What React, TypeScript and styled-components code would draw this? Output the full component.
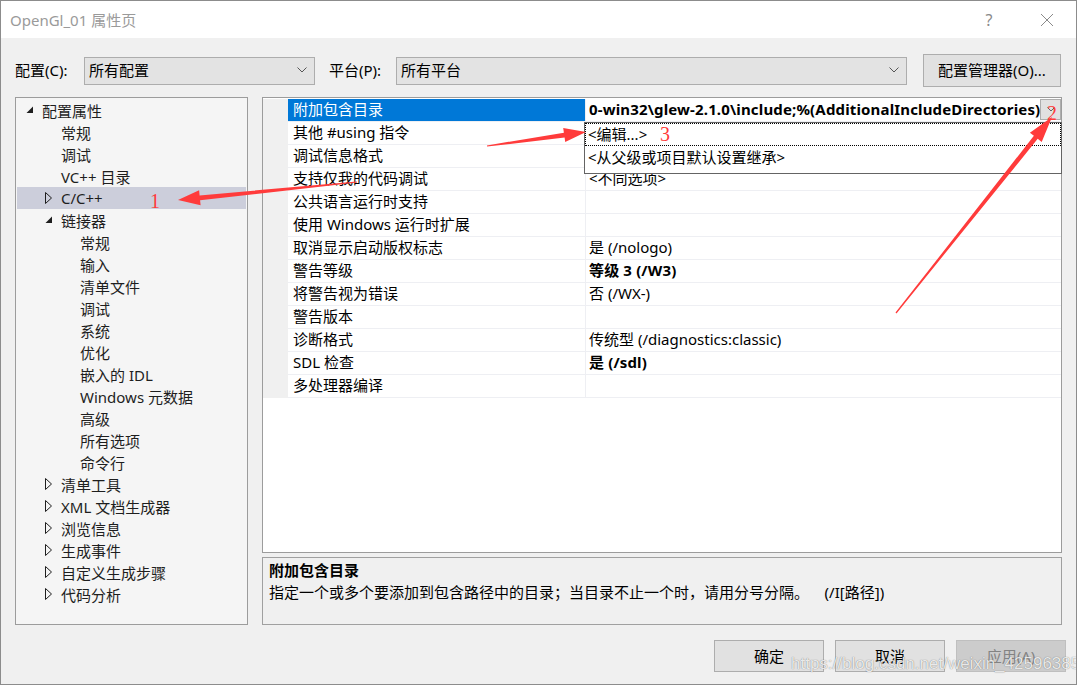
import React from "react";
import styled, { createGlobalStyle } from "styled-components";

const GlobalStyle = createGlobalStyle`
  html, body { margin: 0; padding: 0; background: #ffffff; }
  body { font-family: "Noto Sans", "Noto Sans CJK SC", sans-serif; }
  * { box-sizing: border-box; }
`;

const Window = styled.div`
  position: relative;
  width: 1077px;
  height: 685px;
  border: 1px solid #8c8c8c;
  background: #f0f0f0;
  display: flex;
  flex-direction: column;
  overflow: hidden;
  font-size: 15px;
  color: #000;
`;

const TitleBar = styled.div`
  height: 37px;
  flex-shrink: 0;
  background: #fff;
  display: flex;
  align-items: center;
  padding-left: 9px;
`;

const Title = styled.div`
  flex: 1;
  color: #9a9a9a;
  font-size: 15px;
  padding-bottom: 1px;
`;

const CaptionButtons = styled.div`
  display: flex;
  gap: 12px;
  padding-right: 6px;
`;

const CaptionButton = styled.div`
  width: 46px;
  height: 37px;
  display: flex;
  align-items: center;
  justify-content: center;
  color: #8a8a8a;
  font-size: 16px;
`;

const ConfigRow = styled.div`
  margin-top: 16px;
  height: 33px;
  flex-shrink: 0;
  padding-left: 14px;
  display: flex;
  align-items: center;
`;

const Label = styled.div<{ $w: number; $ml?: number }>`
  width: ${(p) => p.$w}px;
  margin-left: ${(p) => p.$ml ?? 0}px;
  color: #000;
  white-space: nowrap;
  padding-bottom: 3px;
`;

const Select = styled.div<{ $w: number }>`
  width: ${(p) => p.$w}px;
  height: 28px;
  background: #e3e3e3;
  border: 1px solid #adadad;
  display: flex;
  align-items: center;
  justify-content: space-between;
  padding: 0 7px 2px 4px;
  color: #000;
`;

const PushButton = styled.div<{ $w: number; $h: number; $disabled?: boolean }>`
  width: ${(p) => p.$w}px;
  height: ${(p) => p.$h}px;
  background: ${(p) => (p.$disabled ? "#cccccc" : "#e1e1e1")};
  border: 1px solid ${(p) => (p.$disabled ? "#bfbfbf" : "#adadad")};
  color: ${(p) => (p.$disabled ? "#838383" : "#000")};
  display: flex;
  align-items: center;
  justify-content: center;
  flex-shrink: 0;
  padding-bottom: 1px;
`;

const ManagerButton = styled(PushButton)`
  margin-left: 16px;
  padding-bottom: 3px;
`;

const Main = styled.div`
  margin-top: 10px;
  height: 528px;
  flex-shrink: 0;
  padding-left: 14px;
  display: flex;
  gap: 14px;
`;

const TreePanel = styled.div`
  width: 233px;
  height: 100%;
  background: #f5f5f5;
  border: 1px solid #9c9c9c;
  padding: 1px 1px 0;
  display: flex;
  flex-direction: column;
`;

const TreeRow = styled.div<{ $level: number; $selected?: boolean }>`
  height: 22px;
  flex-shrink: 0;
  display: flex;
  align-items: center;
  padding-left: ${(p) => 9 + p.$level * 19}px;
  background: ${(p) => (p.$selected ? "#cccedb" : "transparent")};
  color: #1e1e1e;
  white-space: nowrap;
`;

const TreeIcon = styled.svg`
  width: 16px;
  height: 22px;
  flex-shrink: 0;
`;

const RightColumn = styled.div`
  width: 800px;
  height: 100%;
  display: flex;
  flex-direction: column;
  gap: 4px;
`;

const Grid = styled.div`
  height: 456px;
  flex-shrink: 0;
  background: #fff;
  border: 1px solid #9c9c9c;
  padding-top: 1px;
  display: flex;
  flex-direction: column;
`;

const GridRow = styled.div`
  position: relative;
  height: 23px;
  display: flex;
  flex-shrink: 0;
`;

const Gutter = styled.div`
  width: 25px;
  flex-shrink: 0;
  background: #f0f0f0;
`;

const NameCell = styled.div<{ $selected?: boolean }>`
  width: 298px;
  flex-shrink: 0;
  padding-left: 5px;
  line-height: 21px;
  border-bottom: 1px solid #eeeff3;
  border-right: 1px solid #eeeff3;
  background: ${(p) => (p.$selected ? "#0078d7" : "transparent")};
  color: ${(p) => (p.$selected ? "#fff" : "#000")};
  white-space: nowrap;
`;

const ValueCell = styled.div<{ $bold?: boolean }>`
  flex: 1;
  min-width: 0;
  display: flex;
  align-items: flex-start;
  justify-content: space-between;
  padding-left: 3px;
  line-height: 21px;
  border-bottom: 1px solid #eeeff3;
  font-weight: ${(p) => (p.$bold ? 700 : 400)};
  letter-spacing: ${(p) => (p.$bold ? "0.15px" : "0")};
  white-space: nowrap;
  overflow: hidden;
`;

const DropButton = styled.div`
  width: 21px;
  height: 21px;
  flex-shrink: 0;
  background: #e1e1e1;
  border: 1px solid #adadad;
  display: flex;
  align-items: center;
  justify-content: center;
`;

const Popup = styled.div`
  position: absolute;
  left: 321px;
  top: 23px;
  width: 478px;
  height: 52px;
  background: #fff;
  border: 1px solid #646464;
  z-index: 2;
`;

const PopupItem = styled.div<{ $focused?: boolean }>`
  height: 23px;
  line-height: 20px;
  padding-left: 2px;
  border: 1px ${(p) => (p.$focused ? "dotted #000" : "solid transparent")};
  white-space: nowrap;
`;

const DescPanel = styled.div`
  height: 68px;
  flex-shrink: 0;
  border: 1px solid #a0a0a0;
  background: #f0f0f0;
  padding: 1px 6px 0;
`;

const DescTitle = styled.div`
  font-weight: 700;
  line-height: 22px;
`;

const DescText = styled.div`
  line-height: 22px;
  white-space: pre;
`;

const Footer = styled.div`
  margin-top: 15px;
  padding-right: 10px;
  display: flex;
  justify-content: flex-end;
  gap: 11px;
`;

const Watermark = styled.div`
  position: absolute;
  left: 790px;
  top: 653px;
  font-family: "Liberation Sans", sans-serif;
  font-size: 17px;
  color: rgba(255, 255, 255, 0.85);
  text-shadow: 0 0 1px rgba(0, 0, 0, 0.55);
  pointer-events: none;
  z-index: 5;
`;

const Annotations = styled.div`
  position: absolute;
  left: 0;
  top: 0;
  width: 100%;
  height: 100%;
  pointer-events: none;
  z-index: 10;
`;

const ArrowLayer = styled.svg`
  position: absolute;
  left: -1px;
  top: -1px;
  width: 1077px;
  height: 685px;
`;

const Mark = styled.span<{ $x: number; $y: number }>`
  position: absolute;
  left: ${(p) => p.$x - 1}px;
  top: ${(p) => p.$y - 1}px;
  font-family: "Liberation Serif", serif;
  font-size: 20px;
  line-height: 20px;
  color: #ff3b3b;
`;

const Chevron = ({ size = 10, color = "#555" }: { size?: number; color?: string }) => (
  <svg width={size} height={size * 0.6} viewBox="0 0 10 6">
    <polyline points="0.5,0.5 5,5 9.5,0.5" fill="none" stroke={color} strokeWidth="1" />
  </svg>
);

type TreeItem = { level: number; text: string; icon?: "open" | "closed"; selected?: boolean };

const treeItems: TreeItem[] = [
  { level: 0, text: "配置属性", icon: "open" },
  { level: 1, text: "常规" },
  { level: 1, text: "调试" },
  { level: 1, text: "VC++ 目录" },
  { level: 1, text: "C/C++", icon: "closed", selected: true },
  { level: 1, text: "链接器", icon: "open" },
  { level: 2, text: "常规" },
  { level: 2, text: "输入" },
  { level: 2, text: "清单文件" },
  { level: 2, text: "调试" },
  { level: 2, text: "系统" },
  { level: 2, text: "优化" },
  { level: 2, text: "嵌入的 IDL" },
  { level: 2, text: "Windows 元数据" },
  { level: 2, text: "高级" },
  { level: 2, text: "所有选项" },
  { level: 2, text: "命令行" },
  { level: 1, text: "清单工具", icon: "closed" },
  { level: 1, text: "XML 文档生成器", icon: "closed" },
  { level: 1, text: "浏览信息", icon: "closed" },
  { level: 1, text: "生成事件", icon: "closed" },
  { level: 1, text: "自定义生成步骤", icon: "closed" },
  { level: 1, text: "代码分析", icon: "closed" },
];

type Prop = { name: string; value?: string; bold?: boolean };

const props: Prop[] = [
  { name: "附加包含目录", value: "0-win32\\glew-2.1.0\\include;%(AdditionalIncludeDirectories)", bold: true },
  { name: "其他 #using 指令" },
  { name: "调试信息格式" },
  { name: "支持仅我的代码调试", value: "<不同选项>" },
  { name: "公共语言运行时支持" },
  { name: "使用 Windows 运行时扩展" },
  { name: "取消显示启动版权标志", value: "是 (/nologo)" },
  { name: "警告等级", value: "等级 3 (/W3)", bold: true },
  { name: "将警告视为错误", value: "否 (/WX-)" },
  { name: "警告版本" },
  { name: "诊断格式", value: "传统型 (/diagnostics:classic)" },
  { name: "SDL 检查", value: "是 (/sdl)", bold: true },
  { name: "多处理器编译" },
];

function arrowPoints(tx: number, ty: number, px: number, py: number, hl: number, hw: number) {
  const dx = px - tx;
  const dy = py - ty;
  const len = Math.hypot(dx, dy);
  const ux = dx / len;
  const uy = dy / len;
  const nx = -uy;
  const ny = ux;
  const bx = px - ux * hl;
  const by = py - uy * hl;
  const pts: [number, number][] = [
    [tx + nx * 0.6, ty + ny * 0.6],
    [bx + nx * 2.4, by + ny * 2.4],
    [bx + nx * hw, by + ny * hw],
    [px, py],
    [bx - nx * hw, by - ny * hw],
    [bx - nx * 2.4, by - ny * 2.4],
    [tx - nx * 0.6, ty - ny * 0.6],
  ];
  return pts.map(([x, y]) => `${x.toFixed(1)},${y.toFixed(1)}`).join(" ");
}

const TreeGlyph = ({ icon }: { icon?: "open" | "closed" }) => (
  <TreeIcon viewBox="0 0 16 22">
    {icon === "open" && <polygon points="7,7.5 7,14 0.5,14" fill="#1e1e1e" />}
    {icon === "closed" && (
      <polygon points="0.5,5.5 6.5,11 0.5,16.5" fill="none" stroke="#1e1e1e" strokeWidth="1" />
    )}
  </TreeIcon>
);

export default function App() {
  return (
    <>
      <GlobalStyle />
      <Window>
        <TitleBar>
          <Title>OpenGl_01 属性页</Title>
          <CaptionButtons>
            <CaptionButton>?</CaptionButton>
            <CaptionButton>
              <svg width="14" height="14" viewBox="0 0 14 14">
                <line x1="1" y1="1" x2="13" y2="13" stroke="#8a8a8a" strokeWidth="1" />
                <line x1="13" y1="1" x2="1" y2="13" stroke="#8a8a8a" strokeWidth="1" />
              </svg>
            </CaptionButton>
          </CaptionButtons>
        </TitleBar>

        <ConfigRow>
          <Label $w={69}>配置(C):</Label>
          <Select $w={231}>
            <span>所有配置</span>
            <Chevron />
          </Select>
          <Label $w={67} $ml={14}>平台(P):</Label>
          <Select $w={511}>
            <span>所有平台</span>
            <Chevron />
          </Select>
          <ManagerButton $w={138} $h={33}>配置管理器(O)...</ManagerButton>
        </ConfigRow>

        <Main>
          <TreePanel>
            {treeItems.map((it, i) => (
              <TreeRow key={i} $level={it.level} $selected={it.selected}>
                <TreeGlyph icon={it.icon} />
                <span>{it.text}</span>
              </TreeRow>
            ))}
          </TreePanel>

          <RightColumn>
            <Grid>
              {props.map((p, i) => (
                <GridRow key={i}>
                  <Gutter />
                  <NameCell $selected={i === 0}>{p.name}</NameCell>
                  <ValueCell $bold={p.bold}>
                    <span>{p.value ?? ""}</span>
                    {i === 0 && (
                      <DropButton>
                        <Chevron size={8} color="#444" />
                      </DropButton>
                    )}
                  </ValueCell>
                  {i === 0 && (
                    <Popup>
                      <PopupItem $focused>&lt;编辑...&gt;</PopupItem>
                      <PopupItem>&lt;从父级或项目默认设置继承&gt;</PopupItem>
                    </Popup>
                  )}
                </GridRow>
              ))}
            </Grid>
            <DescPanel>
              <DescTitle>附加包含目录</DescTitle>
              <DescText>{"指定一个或多个要添加到包含路径中的目录；当目录不止一个时，请用分号分隔。    (/I[路径])"}</DescText>
            </DescPanel>
          </RightColumn>
        </Main>

        <Footer>
          <PushButton $w={110} $h={32}>确定</PushButton>
          <PushButton $w={110} $h={32}>取消</PushButton>
          <PushButton $w={110} $h={32} $disabled>应用(A)</PushButton>
        </Footer>

        <Watermark>https://blog.csdn.net/weixin_42596385</Watermark>

        <Annotations>
          <ArrowLayer viewBox="0 0 1077 685">
            <polygon points={arrowPoints(357, 182, 178, 200, 22, 7.5)} fill="#ff3b3b" />
            <polygon points={arrowPoints(896, 313, 1052, 117, 26, 7.5)} fill="#ff3b3b" />
            <polygon points={arrowPoints(487, 146, 586, 132, 22, 7)} fill="#ff3b3b" />
          </ArrowLayer>
          <Mark $x={150} $y={191}>1</Mark>
          <Mark $x={1047} $y={103}>2</Mark>
          <Mark $x={660} $y={124}>3</Mark>
        </Annotations>
      </Window>
    </>
  );
}
